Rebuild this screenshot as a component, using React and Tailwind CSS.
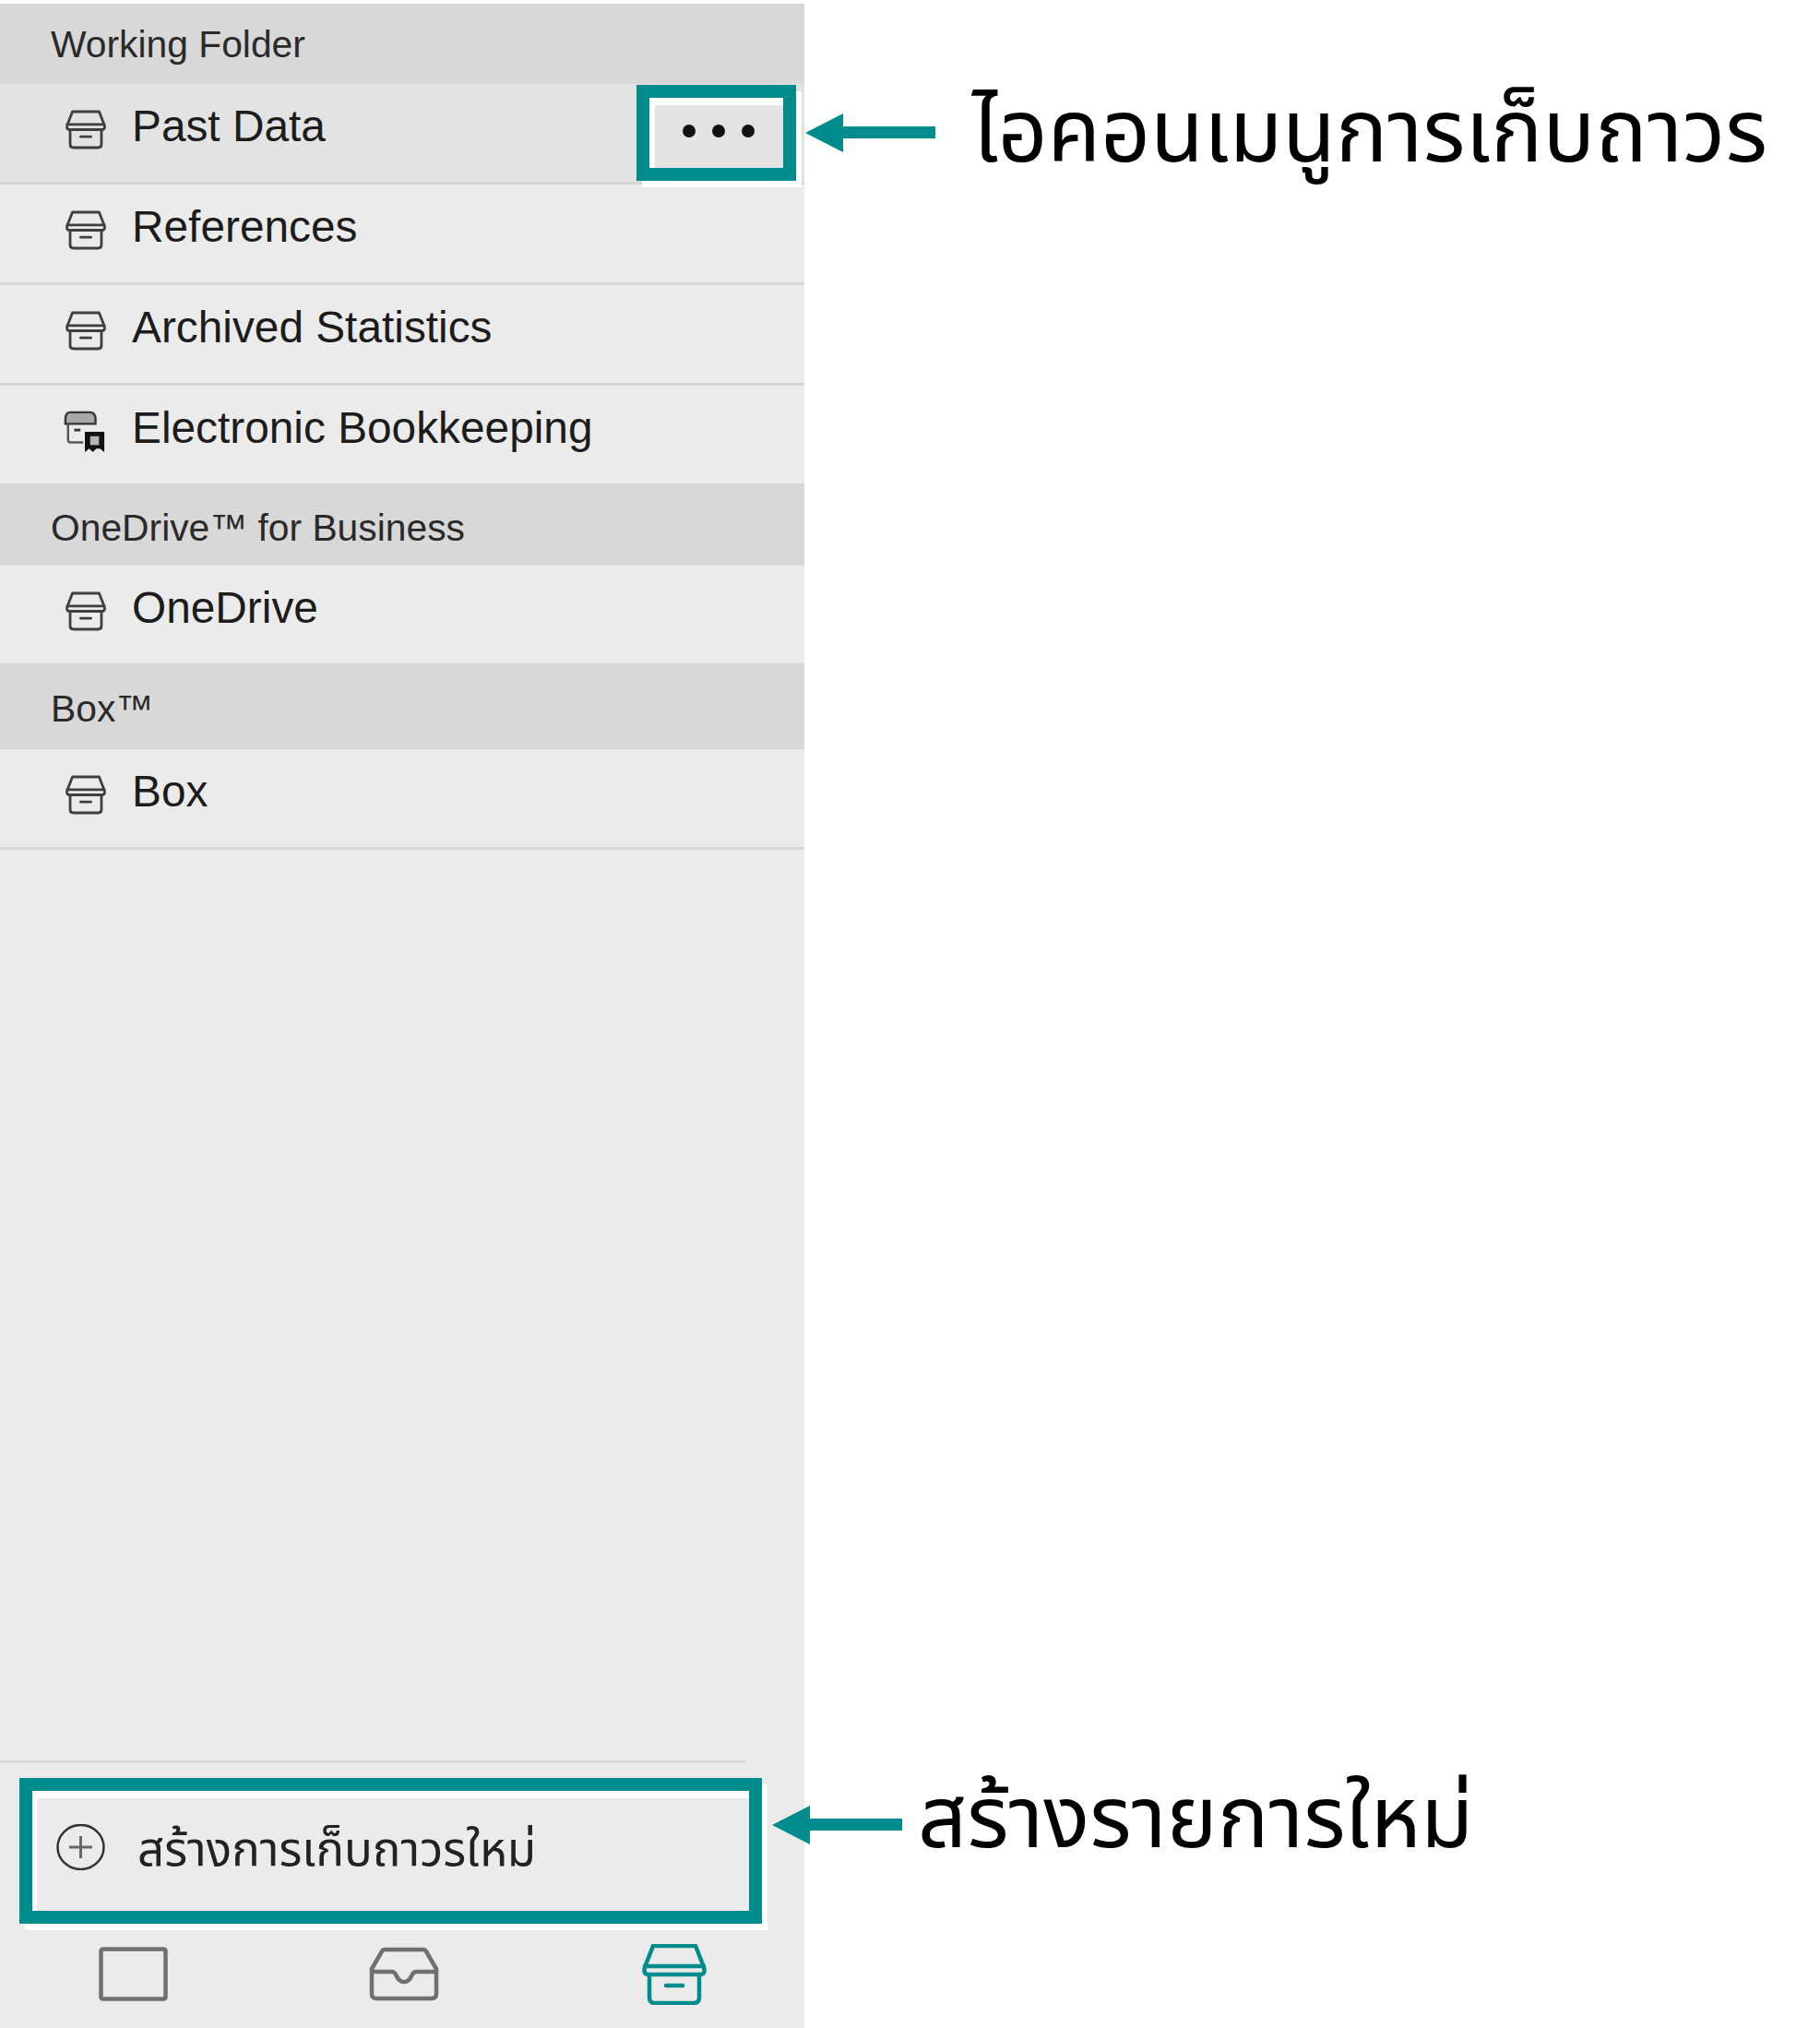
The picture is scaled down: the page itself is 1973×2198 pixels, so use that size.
const TEAL = '#008c8c';

function ArchiveIcon({ className, color = '#3f3f3f' }) {
  return (
    <svg viewBox="0 0 70 66" fill="none" stroke={color} strokeWidth="4.5" strokeLinejoin="round" strokeLinecap="round" className={className}>
      <path d="M12 2H58L67 25Q69 33 63 33H7Q1 33 3 25Z" />
      <path d="M3 24H67" />
      <path d="M8 33V58Q8 64 14 64H56Q62 64 62 58V33" />
      <path d="M26 45H44" />
    </svg>
  );
}

function EbookIcon({ className }) {
  return (
    <svg viewBox="0 0 48 48" fill="none" className={className}>
      <path d="M7 2H30Q35 2 36 8V15H2V8Q3 2 7 2Z" fill="#a8a8a8" stroke="#333" strokeWidth="2.5" />
      <path d="M5 15V33Q5 36 8 36H22" stroke="#555" strokeWidth="2.5" />
      <path d="M12 22H19" stroke="#333" strokeWidth="3" />
      <path d="M24 24H46V47L41 43H37L33 47L29 43L24 47Z" fill="#111" />
      <rect x="30" y="29" width="10" height="10" fill="#b5b5b5" />
    </svg>
  );
}

function InboxIcon({ className }) {
  return (
    <svg viewBox="0 0 76 59" fill="none" stroke="#707070" strokeWidth="4.5" strokeLinejoin="round" strokeLinecap="round" className={className}>
      <path d="M3 24L14 5Q15 3 18 3H58Q61 3 62 5L73 24" />
      <path d="M3 27H25C31 27 29 38 38 38C47 38 45 27 51 27H73" />
      <path d="M3 24V51Q3 56 8 56H68Q73 56 73 51V24" />
    </svg>
  );
}

function SquareIcon({ className }) {
  return (
    <svg viewBox="0 0 75 59" fill="none" stroke="#707070" strokeWidth="4.5" className={className}>
      <rect x="2.5" y="2.5" width="70" height="54" rx="2" />
    </svg>
  );
}

function PlusIcon({ className }) {
  return (
    <svg viewBox="0 0 53 50" fill="none" stroke="#333" className={className}>
      <ellipse cx="26.5" cy="25" rx="25" ry="24" strokeWidth="2.5" />
      <path d="M26.5 13V37M14 25H39" stroke="#666" strokeWidth="3" />
    </svg>
  );
}

function Arrow({ className }) {
  return (
    <svg viewBox="0 0 141 42" className={className}>
      <polygon points="0,21 41,0 41,42" fill={TEAL} />
      <rect x="41" y="14" width="100" height="13" fill={TEAL} />
    </svg>
  );
}

function SectionHeader({ title, className }) {
  return (
    <div className={`bg-[#d8d8d8] pl-[55px] text-[40.8px] leading-[46px] text-[#2a2a2a] ${className}`}>{title}</div>
  );
}

function Row({ label, icon, className, children }) {
  return (
    <div className={`relative flex h-[109px] items-start border-b-[3px] border-[#d6d6d6] pl-[71px] ${className}`}>
      {icon || <ArchiveIcon className="mt-[27px] h-[45px] w-[44px] shrink-0" />}
      <span className="ml-[28px] mt-[18px] text-[47.8px] leading-[56px] text-[#1c1c1c]">{label}</span>
      {children}
    </div>
  );
}

export default function App() {
  return (
    <div className="relative h-[2198px] w-[1973px] overflow-hidden bg-white font-['Liberation_Sans','Noto_Sans_Thai',sans-serif]">
      <div className="mt-[4px] flex h-[2194px] w-[872px] flex-col bg-[#ebebeb] pb-[25px]">
        <SectionHeader title="Working Folder" className="h-[87px] pt-[21px]" />
        <Row label="Past Data" className="bg-[#e3e3e3]">
          <div className="absolute left-[690px] top-px z-10 h-[104px] w-[173px] border-[14px] border-[#008c8c] bg-[#e3e3e3] shadow-[6px_7px_0_#fff]">
            <div className="flex h-full items-center justify-center gap-[18px] border-l-[6px] border-t-[8px] border-white pb-[12px] pr-[2px]">
              <span className="h-[14px] w-[14px] rounded-full bg-[#111]" />
              <span className="h-[14px] w-[14px] rounded-full bg-[#111]" />
              <span className="h-[14px] w-[14px] rounded-full bg-[#111]" />
            </div>
          </div>
        </Row>
        <Row label="References" />
        <Row label="Archived Statistics" />
        <Row label="Electronic Bookkeeping" icon={<EbookIcon className="-ml-[2px] mt-[25px] h-[50px] w-[46px] shrink-0" />} />
        <SectionHeader title="OneDrive™ for Business" className="h-[86px] pt-[22px]" />
        <Row label="OneDrive" />
        <SectionHeader title="Box™" className="h-[90px] pt-[23px]" />
        <Row label="Box" />

        <div className="flex-1" />

        <div className="mr-[64px] h-[3px] bg-[#d6d6d6]" />
        <div className="ml-[21px] mt-[16px] h-[158px] w-[805px] border-[14px] border-[#008c8c] shadow-[6px_7px_0_#fff]">
          <div className="flex h-full items-start border-l-[5px] border-t-[8px] border-white pl-[21px] pt-[28px]">
            <PlusIcon className="h-[50px] w-[53px] shrink-0" />
            <span className="ml-[35px] text-[51px] leading-[56px] text-[#222]">สร้างการเก็บถาวรใหม่</span>
          </div>
        </div>
        <div className="mt-[22px] flex items-start gap-[218px] pl-[107px]">
          <SquareIcon className="mt-[3px] h-[59px] w-[75px]" />
          <InboxIcon className="mt-[3px] h-[59px] w-[76px]" />
          <ArchiveIcon color={TEAL} className="ml-[2px] h-[66px] w-[70px]" />
        </div>
      </div>

      <Arrow className="absolute left-[873px] top-[123px] h-[42px] w-[141px]" />
      <div className="absolute left-[1054px] top-[78px] whitespace-nowrap text-[94px] leading-[130px] text-black">ไอคอนเมนูการเก็บถาวร</div>
      <Arrow className="absolute left-[837px] top-[1957px] h-[42px] w-[141px]" />
      <div className="absolute left-[995px] top-[1905px] whitespace-nowrap text-[93px] leading-[130px] text-black">สร้างรายการใหม่</div>
    </div>
  );
}
